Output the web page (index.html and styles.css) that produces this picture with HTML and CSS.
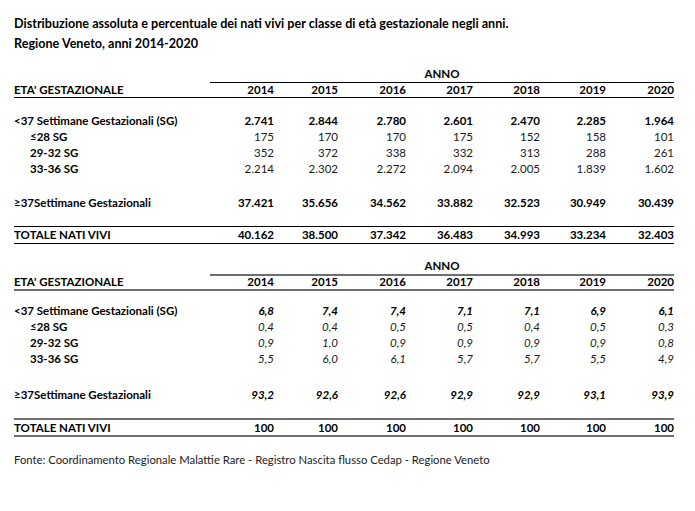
FILE: index.html
```html
<!DOCTYPE html>
<html lang="it">
<head>
<meta charset="utf-8">
<title>Nati vivi per età gestazionale</title>
<link rel="stylesheet" href="styles.css">
</head>
<body>
<div class="page">
  <h1 class="title">Distribuzione assoluta e percentuale dei nati vivi per classe di età gestazionale negli anni.<br>Regione Veneto, anni 2014-2020</h1>

  <div class="tbl abs">
    <div class="row r-anno"><span></span><span class="anno">ANNO</span></div>
    <div class="row r-head"><span class="lbl">ETA' GESTAZIONALE</span><span>2014</span><span>2015</span><span>2016</span><span>2017</span><span>2018</span><span>2019</span><span>2020</span></div>
    <div class="gap g-head"></div>
    <div class="row r-main"><span class="lbl">&lt;37 Settimane Gestazionali (SG)</span><span>2.741</span><span>2.844</span><span>2.780</span><span>2.601</span><span>2.470</span><span>2.285</span><span>1.964</span></div>
    <div class="row r-sub"><span class="lbl">≤28 SG</span><span>175</span><span>170</span><span>170</span><span>175</span><span>152</span><span>158</span><span>101</span></div>
    <div class="row r-sub"><span class="lbl">29-32 SG</span><span>352</span><span>372</span><span>338</span><span>332</span><span>313</span><span>288</span><span>261</span></div>
    <div class="row r-sub"><span class="lbl">33-36 SG</span><span>2.214</span><span>2.302</span><span>2.272</span><span>2.094</span><span>2.005</span><span>1.839</span><span>1.602</span></div>
    <div class="gap g-mid"></div>
    <div class="row r-main"><span class="lbl">≥37Settimane Gestazionali</span><span>37.421</span><span>35.656</span><span>34.562</span><span>33.882</span><span>32.523</span><span>30.949</span><span>30.439</span></div>
    <div class="gap g-end"></div>
    <div class="row r-total"><span class="lbl">TOTALE NATI VIVI</span><span>40.162</span><span>38.500</span><span>37.342</span><span>36.483</span><span>34.993</span><span>33.234</span><span>32.403</span></div>
  </div>

  <div class="tbl pct">
    <div class="row r-anno"><span></span><span class="anno">ANNO</span></div>
    <div class="row r-head"><span class="lbl">ETA' GESTAZIONALE</span><span>2014</span><span>2015</span><span>2016</span><span>2017</span><span>2018</span><span>2019</span><span>2020</span></div>
    <div class="gap g-head"></div>
    <div class="row r-main"><span class="lbl">&lt;37 Settimane Gestazionali (SG)</span><span>6,8</span><span>7,4</span><span>7,4</span><span>7,1</span><span>7,1</span><span>6,9</span><span>6,1</span></div>
    <div class="row r-sub"><span class="lbl">≤28 SG</span><span>0,4</span><span>0,4</span><span>0,5</span><span>0,5</span><span>0,4</span><span>0,5</span><span>0,3</span></div>
    <div class="row r-sub"><span class="lbl">29-32 SG</span><span>0,9</span><span>1,0</span><span>0,9</span><span>0,9</span><span>0,9</span><span>0,9</span><span>0,8</span></div>
    <div class="row r-sub"><span class="lbl">33-36 SG</span><span>5,5</span><span>6,0</span><span>6,1</span><span>5,7</span><span>5,7</span><span>5,5</span><span>4,9</span></div>
    <div class="gap g-mid"></div>
    <div class="row r-main"><span class="lbl">≥37Settimane Gestazionali</span><span>93,2</span><span>92,6</span><span>92,6</span><span>92,9</span><span>92,9</span><span>93,1</span><span>93,9</span></div>
    <div class="gap g-end"></div>
    <div class="row r-total"><span class="lbl">TOTALE NATI VIVI</span><span>100</span><span>100</span><span>100</span><span>100</span><span>100</span><span>100</span><span>100</span></div>
  </div>

  <p class="source">Fonte: Coordinamento Regionale Malattie Rare - Registro Nascita flusso Cedap - Regione Veneto</p>
</div>
</body>
</html>
```

FILE: styles.css
```css
html, body {
  margin: 0;
  padding: 0;
  background: #ffffff;
}

.page {
  padding: 14px 0 0 14px;
  width: 660px;
  font-family: Lato, "Liberation Sans", sans-serif;
  color: #000;
  font-size: 11.5px;
}

.title {
  margin: 0;
  font-size: 12.6px;
  font-weight: bold;
  line-height: 20px;
}

.tbl {
  width: 660px;
}

.tbl.abs {
  margin-top: 12px;
}

.tbl.pct {
  margin-top: 14px;
}

.row {
  display: grid;
  grid-template-columns: 196px 64px 64px 68px 67px 67px 66px 68px;
  height: 16px;
  line-height: 16px;
  white-space: nowrap;
}

.row > span {
  text-align: right;
}

.row > .lbl {
  text-align: left;
}

.r-anno .anno {
  grid-column: 2 / -1;
  text-align: center;
  font-weight: bold;
}

.r-head {
  font-weight: bold;
  height: 15px;
  line-height: 15px;
}

.r-main {
  font-weight: bold;
}

.r-sub > span {
  color: #1a1a1a;
}

.r-sub > .lbl {
  padding-left: 16px;
  font-weight: bold;
  color: #000;
}

.r-total {
  font-weight: bold;
}

/* first table: thin black rules */
.abs .anno {
  border-bottom: 1px solid #000;
}

.abs .r-head {
  border-bottom: 1px solid #000;
}

.abs .r-total {
  border-top: 1px solid #000;
  border-bottom: 1px solid #000;
}

.abs .g-head { height: 15px; }
.abs .g-mid { height: 18px; }
.abs .g-end { height: 15px; }

/* second table: heavier grey rules, italic percentages */
.pct .anno {
  border-bottom: 2px solid #6e6e6e;
}

.pct .r-head {
  border-bottom: 2px solid #6e6e6e;
}

.pct .r-total {
  height: 15px;
  line-height: 15px;
  border-top: 2px solid #6e6e6e;
  border-bottom: 2px solid #6e6e6e;
}

.pct .g-head { height: 12px; }
.pct .g-mid { height: 20px; }
.pct .g-end { height: 15px; }

.pct .r-main > span:not(.lbl),
.pct .r-sub > span:not(.lbl) {
  font-style: italic;
}

.source {
  margin: 16px 0 0;
  font-size: 11.3px;
  line-height: 14px;
  color: #222;
}
```
